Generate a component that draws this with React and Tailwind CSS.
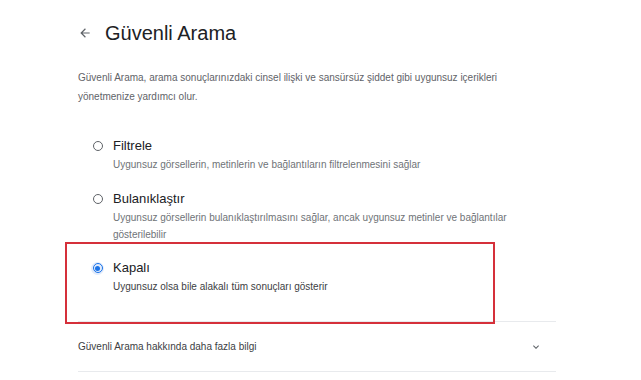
import React from "react";

function Radio({ checked }) {
  if (checked) {
    return (
      <span className="flex items-center justify-center w-[13px] h-[13px] rounded-full bg-[#e3ecfb]">
        <span className="flex items-center justify-center w-[10px] h-[10px] rounded-full border-[1.5px] border-[#1a73e8]">
          <span className="w-[5px] h-[5px] rounded-full bg-[#1a73e8]" />
        </span>
      </span>
    );
  }
  return (
    <span className="flex items-center justify-center w-[13px] h-[13px]">
      <span className="w-[10px] h-[10px] rounded-full border-[1.2px] border-[#5f6368]" />
    </span>
  );
}

function Option({ checked, title, lines, className }) {
  return (
    <div className={"flex " + className}>
      <div className="w-[35px] flex justify-end pr-[9px] pt-[1.5px]">
        <Radio checked={checked} />
      </div>
      <div>
        <div className="text-[13px] leading-[16px] text-[#202124]">{title}</div>
        <div
          className={
            "mt-[2px] text-[10px] leading-[17px] whitespace-nowrap " +
            (checked ? "text-[#3c4043]" : "text-[#6f7377]")
          }
        >
          {lines}
        </div>
      </div>
    </div>
  );
}

export default function App() {
  return (
    <div
      className="relative w-[641px] h-[380px] bg-white overflow-hidden"
      style={{ fontFamily: '"Liberation Sans", Arial, sans-serif' }}
    >
      <div className="ml-[78px] w-[478px]">
        <div className="flex items-center pt-[21px] h-[45px]">
          <svg width="14" height="14" viewBox="0 0 24 24">
            <path
              d="M20 11H7.83l5.59-5.59L12 4l-8 8 8 8 1.41-1.41L7.83 13H20v-2z"
              fill="#5f6368"
            />
          </svg>
          <span className="ml-[13px] text-[20px] leading-[24px] text-[#202124]">
            Güvenli Arama
          </span>
        </div>
        <p className="mt-[23px] text-[10px] leading-[19px] text-[#5f6368] whitespace-nowrap">
          Güvenli Arama, arama sonuçlarınızdaki cinsel ilişki ve sansürsüz şiddet gibi uygunsuz içerikleri
          <br />
          yönetmenize yardımcı olur.
        </p>
        <Option
          className="mt-[32px]"
          title="Filtrele"
          lines="Uygunsuz görsellerin, metinlerin ve bağlantıların filtrelenmesini sağlar"
        />
        <Option
          className="mt-[18px]"
          title="Bulanıklaştır"
          lines={
            <>
              Uygunsuz görsellerin bulanıklaştırılmasını sağlar, ancak uygunsuz metinler ve bağlantılar
              <br />
              gösterilebilir
            </>
          }
        />
        <Option
          className="mt-[17px]"
          checked
          title="Kapalı"
          lines="Uygunsuz olsa bile alakalı tüm sonuçları gösterir"
        />
        <div className="mt-[26px] border-t border-b border-[#e8eaed] h-[51px] flex items-center justify-between">
          <span className="text-[10px] text-[#3c4043]">Güvenli Arama hakkında daha fazla bilgi</span>
          <svg width="12" height="12" viewBox="0 0 24 24" className="mr-[14px]">
            <path d="M7.41 8.59 12 13.17l4.59-4.58L18 10l-6 6-6-6 1.41-1.41z" fill="#5f6368" />
          </svg>
        </div>
      </div>
      <div className="absolute left-[65px] top-[242px] w-[430px] h-[82px] border-2 border-[#d5303a]" />
    </div>
  );
}
